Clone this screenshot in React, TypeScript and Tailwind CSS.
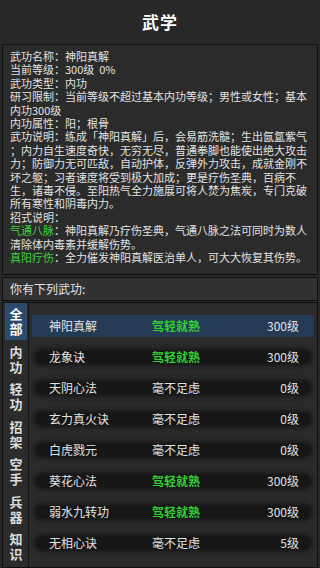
import React from "react";

const font = { fontFamily: '"Noto Sans CJK SC", "Noto Sans", sans-serif' };

const info = `武功名称：神阳真解
当前等级：300级  0%
武功类型：内功
研习限制：当前等级不超过基本内功等级；男性或女性；基本
内功300级
内功属性：阳；根骨
武功说明：练成「神阳真解」后，会易筋洗髓；生出氤氲紫气
；内力自生速度奇快，无穷无尽，普通拳脚也能使出绝大攻击
力；防御力无可匹敌，自动护体，反弹外力攻击，成就金刚不
坏之躯；习者速度将受到极大加成；更是疗伤圣典，百病不
生，诸毒不侵。至阳热气全力施展可将人焚为焦炭，专门克破
所有寒性和阴毒内力。
招式说明：
`;

const tabs = ["全部", "内功", "轻功", "招架", "空手", "兵器", "知识"];

const skills = [
  { name: "神阳真解", state: "驾轻就熟", level: "300级", good: true },
  { name: "龙象诀", state: "驾轻就熟", level: "300级", good: true },
  { name: "天阴心法", state: "毫不足虑", level: "0级", good: false },
  { name: "玄力真火诀", state: "毫不足虑", level: "0级", good: false },
  { name: "白虎戮元", state: "毫不足虑", level: "0级", good: false },
  { name: "葵花心法", state: "驾轻就熟", level: "300级", good: true },
  { name: "弱水九转功", state: "驾轻就熟", level: "300级", good: true },
  { name: "无相心诀", state: "毫不足虑", level: "5级", good: false },
];

const SkillRow = ({ skill, active }) => {
  const text = (
    <>
      <span className="w-[103px] whitespace-nowrap">{skill.name}</span>
      <span className={skill.good ? "text-[#2fd02f] font-bold" : ""}>{skill.state}</span>
      <span className="ml-auto">{skill.level}</span>
    </>
  );
  return (
    <div className="h-[31px] flex items-center">
      {active ? (
        <div className="w-full h-[22px] bg-[#243b55] flex items-center pl-[17px] pr-[15px] text-[12px]">{text}</div>
      ) : (
        <div className="w-full mx-[4px] h-[12px] rounded-full bg-[#161616] shadow-[0_0_5px_2px_rgba(10,10,10,0.7)] flex items-center pl-[13px] pr-[11px] text-[12px]">
          {text}
        </div>
      )}
    </div>
  );
};

export default function App() {
  return (
    <div className="w-[320px] h-[568px] bg-[#282828] text-[#e2e2e2] overflow-hidden flex flex-col" style={font}>
      <div className="h-[44px] flex items-center justify-center text-[17px] font-bold text-white tracking-[1px]">武学</div>

      <div className="mx-[2px] border border-[#101010] bg-[#2b2b2b] px-[7px] pt-[5px] pb-[9px] text-[11px] leading-[13.4px] whitespace-pre">
        {info}
        <span className="text-[#3fcf3f]">气通八脉</span>
        {"：神阳真解乃疗伤圣典，气通八脉之法可同时为数人\n清除体内毒素并缓解伤势。\n"}
        <span className="text-[#3fcf3f]">真阳疗伤</span>
        {"：全力催发神阳真解医治单人，可大大恢复其伤势。"}
      </div>

      <div className="mx-[2px] mt-[2px] h-[24px] border border-[#101010] bg-[#323232] flex items-center px-[7px] text-[12px]">
        你有下列武功:
      </div>

      <div className="mx-[2px] mt-[1px] h-[266px] border border-[#101010] bg-[#2b2b2b] flex">
        <div className="w-[26px] border-r border-[#151515] flex flex-col pl-[2px]">
          {tabs.map((t, i) => (
            <div
              key={t}
              className={
                "h-[37.5px] w-[22px] flex items-center justify-center " +
                (i === 0 ? "bg-[#2c4b6c] text-white" : "text-[#dcdcdc]")
              }
            >
              <div className="w-[13px] break-all text-[13px] leading-[15px] font-bold">{t}</div>
            </div>
          ))}
        </div>
        <div className="flex-1 flex flex-col pt-[8px] px-[3px]">
          {skills.map((s, i) => (
            <SkillRow key={s.name} skill={s} active={i === 0} />
          ))}
        </div>
      </div>
    </div>
  );
}
